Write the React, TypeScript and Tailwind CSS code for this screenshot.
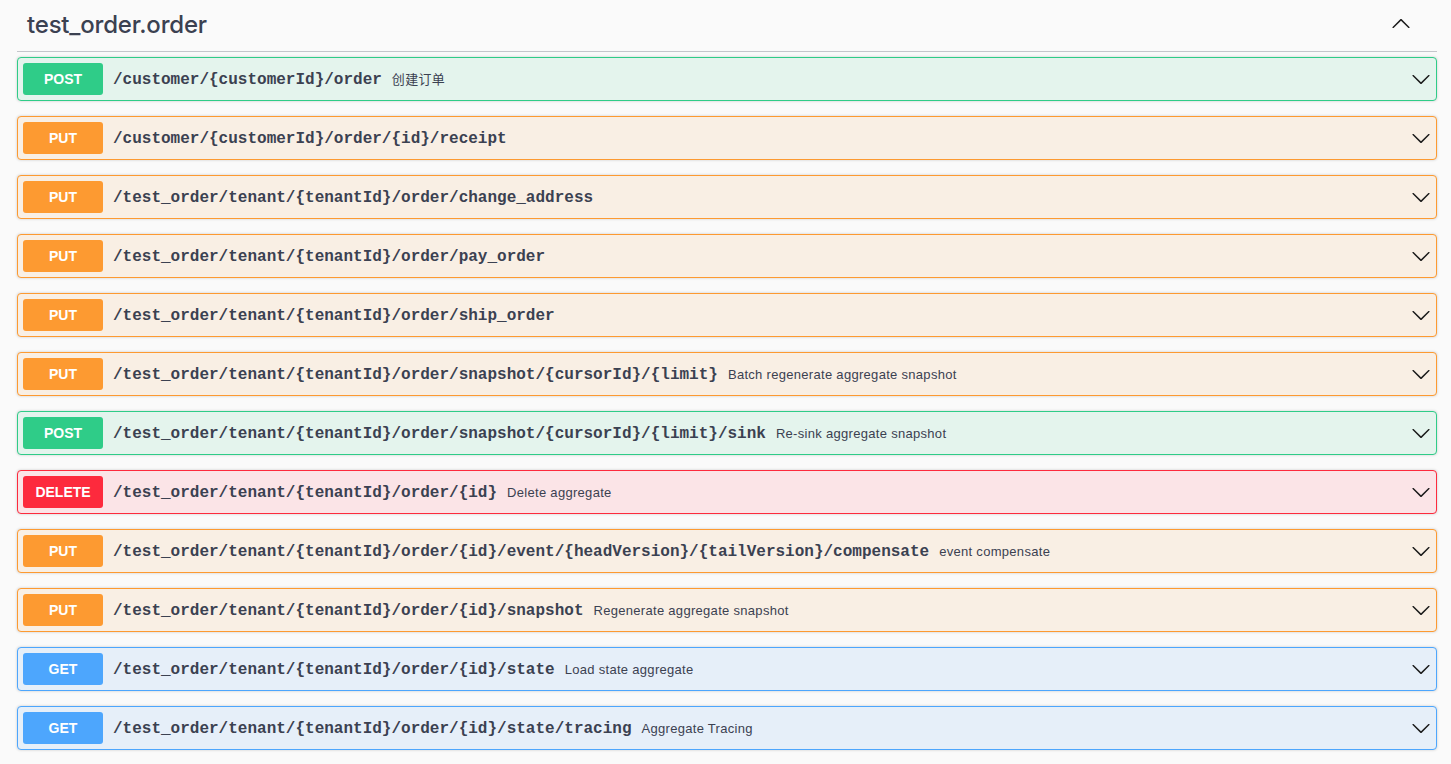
import React from "react";

type Method = "POST" | "PUT" | "DELETE" | "GET";

const styles: Record<Method, { row: string; badge: string }> = {
  POST: { row: "border-[#2fcc88] bg-[#e4f4ed]", badge: "bg-[#2fcc88]" },
  PUT: { row: "border-[#fd9a31] bg-[#f9efe4]", badge: "bg-[#fd9a31]" },
  DELETE: { row: "border-[#fd2a3d] bg-[#fbe4e7]", badge: "bg-[#fd2a3d]" },
  GET: { row: "border-[#4da6fd] bg-[#e6eff9]", badge: "bg-[#4da6fd]" },
};

const ops: { m: Method; path: string; desc?: string }[] = [
  { m: "POST", path: "/customer/{customerId}/order", desc: "创建订单" },
  { m: "PUT", path: "/customer/{customerId}/order/{id}/receipt" },
  { m: "PUT", path: "/test_order/tenant/{tenantId}/order/change_address" },
  { m: "PUT", path: "/test_order/tenant/{tenantId}/order/pay_order" },
  { m: "PUT", path: "/test_order/tenant/{tenantId}/order/ship_order" },
  {
    m: "PUT",
    path: "/test_order/tenant/{tenantId}/order/snapshot/{cursorId}/{limit}",
    desc: "Batch regenerate aggregate snapshot",
  },
  {
    m: "POST",
    path: "/test_order/tenant/{tenantId}/order/snapshot/{cursorId}/{limit}/sink",
    desc: "Re-sink aggregate snapshot",
  },
  { m: "DELETE", path: "/test_order/tenant/{tenantId}/order/{id}", desc: "Delete aggregate" },
  {
    m: "PUT",
    path: "/test_order/tenant/{tenantId}/order/{id}/event/{headVersion}/{tailVersion}/compensate",
    desc: "event compensate",
  },
  { m: "PUT", path: "/test_order/tenant/{tenantId}/order/{id}/snapshot", desc: "Regenerate aggregate snapshot" },
  { m: "GET", path: "/test_order/tenant/{tenantId}/order/{id}/state", desc: "Load state aggregate" },
  { m: "GET", path: "/test_order/tenant/{tenantId}/order/{id}/state/tracing", desc: "Aggregate Tracing" },
];

const Arrow = ({ up = false }: { up?: boolean }) => (
  <svg
    width="20"
    height="20"
    viewBox="0 0 20 20"
    className={up ? "rotate-180" : ""}
    fill="#1a1a1a"
  >
    <path d="M17.418 6.109c.272-.268.709-.268.979 0s.271.701 0 .969l-7.908 7.83c-.27.268-.707.268-.979 0l-7.908-7.83c-.27-.268-.27-.701 0-.969.271-.268.709-.268.979 0L10 13.25l7.418-7.141z" />
  </svg>
);

export default function App() {
  return (
    <div className="min-h-[764px] bg-[#fafafa] font-['Liberation_Sans',Arial,sans-serif] text-[#3b4151]">
      <div className="ml-[17px] w-[1420px]">
        <div className="mb-[5px] flex h-[52px] items-center border-b border-[#c4c6cb] pb-[3px] pl-[10px] pr-[26px]">
          <h3 className="flex-1 pt-[2px] font-['Inter',sans-serif] text-[24px] font-medium tracking-[-0.2px] text-[#3b4151]">
            test_order.order
          </h3>
          <Arrow up />
        </div>
        <div className="flex flex-col gap-[15px]">
          {ops.map((o, i) => (
            <div
              key={i}
              className={`flex h-[44px] items-center rounded-[4px] border p-[5px] shadow-[0_0_3px_rgba(0,0,0,0.19)] ${styles[o.m].row}`}
            >
              <div
                className={`flex h-[32px] w-[80px] shrink-0 items-center justify-center rounded-[3px] text-[14px] font-bold text-white ${styles[o.m].badge}`}
              >
                {o.m}
              </div>
              <div className="flex flex-1 items-center whitespace-nowrap pt-[2px]">
                <span className="px-[10px] font-['Liberation_Mono','Courier_New',monospace] text-[16px] font-bold text-[#3b4151]">
                  {o.path}
                </span>
                {o.desc && (
                  <span className="font-['Liberation_Sans','Noto_Sans_CJK_SC',sans-serif] text-[13px] tracking-[0.3px] text-[#3b4151]">
                    {o.desc}
                  </span>
                )}
              </div>
              <Arrow />
            </div>
          ))}
        </div>
      </div>
    </div>
  );
}
